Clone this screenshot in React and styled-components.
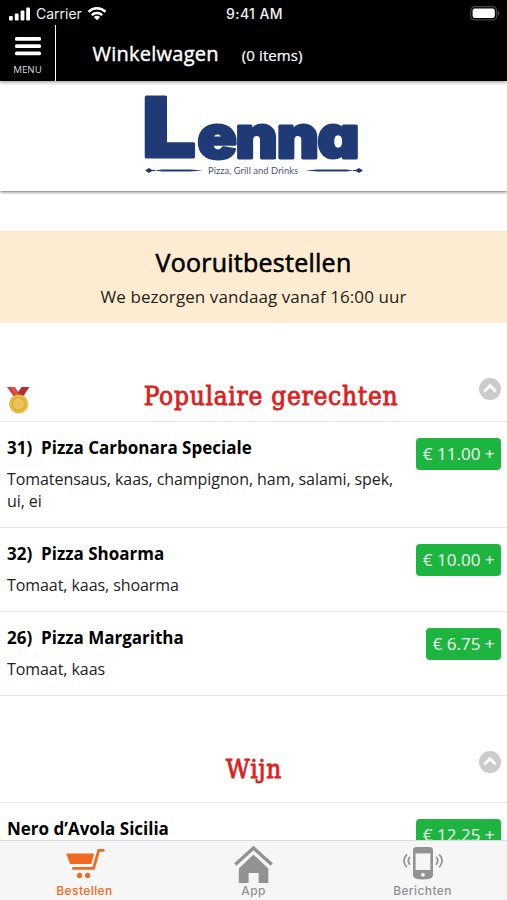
import styled, { createGlobalStyle, css } from 'styled-components';

const green = '#1db53f';
const red = '#dc2020';
const orange = '#f06a21';
const grey = '#929292';
const blue = '#203a76';
const line = '#e6e6e6';

const GlobalStyle = createGlobalStyle`
  * {
    box-sizing: border-box;
  }

  body {
    margin: 0;
    background: #fff;
    color: #000;
    font-family: 'Open Sans', 'Noto Sans', sans-serif;
  }
`;

const Screen = styled.div`
  display: flex;
  flex-direction: column;
  width: 507px;
  height: 900px;
  overflow: hidden;
  background: #fff;
`;

const StatusBar = styled.div`
  display: grid;
  grid-template-columns: 1fr auto 1fr;
  align-items: center;
  flex: none;
  height: 25px;
  padding: 2px 7px 0 9px;
  background: #000;
  color: #f2f2f2;
  font: 400 14px/20px Inter, sans-serif;
`;

const Carrier = styled.div`
  display: flex;
  align-items: center;
  gap: 5px;
`;

const Clock = styled.div`
  font-weight: 500;
  font-size: 14px;
  letter-spacing: 0.4px;
`;

const BatteryIcon = styled.svg`
  justify-self: end;
`;

const NavBar = styled.header`
  display: flex;
  flex: none;
  height: 56px;
  background: #000;
  color: #fff;
  box-shadow: 0 1px 4px rgba(0, 0, 0, 0.45);
  z-index: 2;
`;

const MenuButton = styled.div`
  display: flex;
  flex-direction: column;
  align-items: center;
  width: 56px;
  padding-top: 11px;
  border-right: 1px solid #fff;
  font-size: 9.7px;
  line-height: 14px;
  color: #ddd;

  svg {
    margin-bottom: 7px;
  }
`;

const CartTitle = styled.div`
  padding: 14px 0 0 36.5px;
  font-size: 20px;
  line-height: 30px;
  letter-spacing: 0.25px;
  -webkit-text-stroke: 0.4px #fff;
`;

const CartCount = styled.div`
  padding: 15px 0 0 23px;
  font-size: 15px;
  line-height: 30px;
  letter-spacing: 0.1px;
  -webkit-text-stroke: 0.2px #fff;
`;

const LogoBand = styled.div`
  flex: none;
  display: flex;
  justify-content: center;
  height: 110px;
  padding-top: 9px;
  box-shadow: 0 1px 3px rgba(0, 0, 0, 0.6);
  z-index: 1;
`;

const Content = styled.main`
  flex: 1;
  min-height: 0;
  overflow: hidden;
`;

const Banner = styled.section`
  height: 92px;
  margin-top: 40px;
  padding-top: 13px;
  background: #fdecd1;
  text-align: center;

  h2 {
    margin: 0;
    font-size: 25px;
    font-weight: 400;
    line-height: 36px;
    letter-spacing: 0.25px;
    -webkit-text-stroke: 0.6px #000;
  }

  p {
    margin: 0;
    font-size: 17px;
    line-height: 34px;
    letter-spacing: 0.08px;
    color: #221e18;
  }
`;

const SectionHead = styled.div`
  display: grid;
  grid-template-columns: 30px 1fr 30px;
  height: ${props => props.height}px;
  padding: 0 6px ${props => props.bottom}px 7px;
  border-bottom: 1px solid ${line};
  align-items: end;
`;

const SectionTitle = styled.h3`
  margin: 0;
  padding-left: ${props => props.shift || 0}px;
  color: ${red};
  font: 400 26px/36px 'DejaVu Serif Condensed', 'DejaVu Serif', serif;
  font-stretch: condensed;
  letter-spacing: 0.75px;
  -webkit-text-stroke: 0.8px ${red};
  text-align: center;
  white-space: nowrap;
`;

const Toggle = styled.svg`
  justify-self: end;
  margin-bottom: 14px;
`;

const Item = styled.div`
  display: flex;
  justify-content: space-between;
  align-items: flex-start;
  min-height: 84px;
  padding: 14px 6px 15px 7px;
  border-bottom: 1px solid ${line};
`;

const ItemText = styled.div`
  width: 400px;

  h4 {
    margin: 0 0 9px;
    font-size: 17px;
    font-weight: 700;
    line-height: 23px;
    white-space: pre;
  }

  p {
    margin: 0;
    font-size: 16px;
    line-height: 22px;
    letter-spacing: -0.07px;
    color: #222;
  }
`;

const Price = styled.div`
  flex: none;
  height: 32px;
  margin-top: 2px;
  padding: 0 6.5px;
  border-radius: 4px;
  background: ${green};
  color: #f2fff4;
  font-size: 17px;
  line-height: 31px;
  white-space: nowrap;
`;

const TabBar = styled.nav`
  display: grid;
  grid-template-columns: repeat(3, 1fr);
  flex: none;
  height: 60px;
  background: #f6f6f6;
  border-top: 1px solid #dcdcdc;
`;

const Tab = styled.div`
  display: flex;
  flex-direction: column;
  align-items: center;
  color: ${grey};
  font: 500 12px/16px Inter, sans-serif;
  letter-spacing: 0.4px;

  ${props => props.active && css`
    color: ${orange};
  `}
`;

const LogoWord = styled.text`
  fill: ${blue};
  stroke: ${blue};
  stroke-width: 3px;
  stroke-linejoin: round;
  font-family: Inter, sans-serif;
  font-weight: 900;
  font-feature-settings: 'cv11';
`;

const LogoTagline = styled.text`
  fill: #4a5482;
  font: 400 9.3px Lato, sans-serif;
`;

const Logo = () => (
  <svg width="240" height="96" viewBox="0 0 240 96">
    <LogoWord fontSize="83" transform="translate(8 67) scale(1.15 1)">L</LogoWord>
    <LogoWord fontSize="59" x="0 34.5 72 109" transform="translate(63.5 67.5) scale(1.1 1)">enna</LogoWord>
    <g fill={blue}>
      <path d="M11 80.5l4-2.5 4 2.5-4 2.5z" />
      <path d="M18 79.9h3v1.2h-3z" />
      <path d="M20 80.5l8-1h28l13 1-13 1H28z" />
      <path d="M229 80.5l-4-2.5-4 2.5 4 2.5z" />
      <path d="M219 79.9h3v1.2h-3z" />
      <path d="M220 80.5l-8-1h-28l-13 1 13 1h28z" />
    </g>
    <LogoTagline x="74" y="84" textLength="90">Pizza, Grill and Drinks</LogoTagline>
  </svg>
);

const SignalIcon = () => (
  <svg width="22" height="14" viewBox="0 0 22 14" fill="#fff">
    <rect x="0" y="9" width="3.8" height="4.5" rx="1" />
    <rect x="5.8" y="6.5" width="3.8" height="7" rx="1" />
    <rect x="11.6" y="3.5" width="3.8" height="10" rx="1" />
    <rect x="17.2" y="0.5" width="3.8" height="13" rx="1" />
  </svg>
);

const WifiIcon = () => (
  <svg width="20" height="15" viewBox="0 0 20 15" fill="none" stroke="#fff" strokeWidth="2.5">
    <path d="M1.5 5.8a12.2 12.2 0 0 1 17 0" />
    <path d="M4.8 9.1a7.5 7.5 0 0 1 10.4 0" />
    <path d="M10 14.2l-3.1-3.1a4.4 4.4 0 0 1 6.2 0z" fill="#fff" stroke="none" />
  </svg>
);

const Battery = () => (
  <BatteryIcon width="30" height="15" viewBox="0 0 30 15">
    <rect x="0.7" y="0.7" width="26" height="13.2" rx="4" fill="none" stroke="#444" strokeWidth="1.2" />
    <rect x="2.6" y="2.6" width="22.2" height="9.4" rx="2.2" fill="#fff" />
    <path d="M27.8 5v4.6c2-.8 2-3.8 0-4.6z" fill="#555" />
  </BatteryIcon>
);

const Medal = () => (
  <svg width="23" height="28" viewBox="0 0 23 28">
    <path d="M0 1h8l5 8-5 3z" fill="#d63c34" />
    <path d="M22.5 1h-8L9 9l6 3z" fill="#b92e2e" />
    <path d="M7 1l5 8-2 2-6-10z" fill="#e3564b" />
    <circle cx="11.7" cy="18" r="9.6" fill="#e6bd47" />
    <circle cx="11.7" cy="18" r="6.4" fill="#e8c555" stroke="#d6a93c" strokeWidth="1.2" />
  </svg>
);

const Chevron = () => (
  <Toggle width="22" height="22" viewBox="0 0 22 22">
    <circle cx="11" cy="11" r="11" fill="#cbcbcb" />
    <path d="M5.2 13.5L11 7.8l5.8 5.7" fill="none" stroke="#fff" strokeWidth="2.8" />
  </Toggle>
);

const CartIcon = () => (
  <svg width="40" height="42" viewBox="0 0 40 42" fill={orange}>
    <path d="M1 12.6h28l-2.7 10.5H5.2z" />
    <path d="M39.5 9.4h-5.8l-5.2 18H7.2" fill="none" stroke={orange} strokeWidth="2.8" />
    <circle cx="14.6" cy="34.4" r="2.6" />
    <circle cx="22.6" cy="34.4" r="2.6" />
  </svg>
);

const HomeIcon = () => (
  <svg width="39" height="42" viewBox="0 0 39 42">
    <path d="M1.3 23.6L19.5 7l18.2 16.6" fill="none" stroke={grey} strokeWidth="3.4" />
    <path d="M19.5 13.6L34.3 27.4V42H24.6V32h-10v10H4.8V27.4z" fill={grey} />
  </svg>
);

const PhoneIcon = () => (
  <svg width="40" height="42" viewBox="0 0 40 42">
    <path d="M10 9q0-3 3.5-3h13Q30 6 30 9v25q0 4.5-10 4.5T10 34z" fill={grey} />
    <rect x="12.6" y="12.4" width="14.8" height="16.6" fill="#f6f6f6" />
    <circle cx="20" cy="33.8" r="1.9" fill="#f6f6f6" />
    <g fill="none" stroke={grey} strokeWidth="1.7">
      <path d="M7 15.8q-3.4 4 0 8" />
      <path d="M3.8 13.4q-5.8 6.4 0 12.8" />
      <path d="M33 15.8q3.4 4 0 8" />
      <path d="M36.2 13.4q5.8 6.4 0 12.8" />
    </g>
  </svg>
);

const popular = [
  { name: '31)  Pizza Carbonara Speciale', info: 'Tomatensaus, kaas, champignon, ham, salami, spek, ui, ei', price: '11.00' },
  { name: '32)  Pizza Shoarma', info: 'Tomaat, kaas, shoarma', price: '10.00' },
  { name: '26)  Pizza Margaritha', info: 'Tomaat, kaas', price: '6.75' },
];

const wines = [
  { name: 'Nero d’Avola Sicilia', price: '12.25' },
];

const MenuItem = ({ name, info, price }) => (
  <Item>
    <ItemText>
      <h4>{name}</h4>
      {info && <p>{info}</p>}
    </ItemText>
    <Price>€ {price} +</Price>
  </Item>
);

const App = () => {
  return (
    <Screen>
      <GlobalStyle />
      <StatusBar>
        <Carrier>
          <SignalIcon />
          Carrier
          <WifiIcon />
        </Carrier>
        <Clock>9:41 AM</Clock>
        <Battery />
      </StatusBar>
      <NavBar>
        <MenuButton>
          <svg width="26" height="20" viewBox="0 0 26 20" fill="#fff">
            <rect y="1" width="26" height="3.8" rx="1.5" />
            <rect y="8.2" width="26" height="3.8" rx="1.5" />
            <rect y="15.4" width="26" height="3.8" rx="1.5" />
          </svg>
          MENU
        </MenuButton>
        <CartTitle>Winkelwagen</CartTitle>
        <CartCount>(0 items)</CartCount>
      </NavBar>
      <LogoBand>
        <Logo />
      </LogoBand>
      <Content>
        <Banner>
          <h2>Vooruitbestellen</h2>
          <p>We bezorgen vandaag vanaf 16:00 uur</p>
        </Banner>
        <SectionHead height={99} bottom={7}>
          <Medal />
          <SectionTitle shift={34}>Populaire gerechten</SectionTitle>
          <Chevron />
        </SectionHead>
        {popular.map(item => <MenuItem key={item.name} {...item} />)}
        <SectionHead height={107} bottom={15}>
          <span />
          <SectionTitle>Wijn</SectionTitle>
          <Chevron />
        </SectionHead>
        {wines.map(item => <MenuItem key={item.name} {...item} />)}
      </Content>
      <TabBar>
        <Tab active>
          <CartIcon />
          Bestellen
        </Tab>
        <Tab>
          <HomeIcon />
          App
        </Tab>
        <Tab>
          <PhoneIcon />
          Berichten
        </Tab>
      </TabBar>
    </Screen>
  );
};

export default App;
